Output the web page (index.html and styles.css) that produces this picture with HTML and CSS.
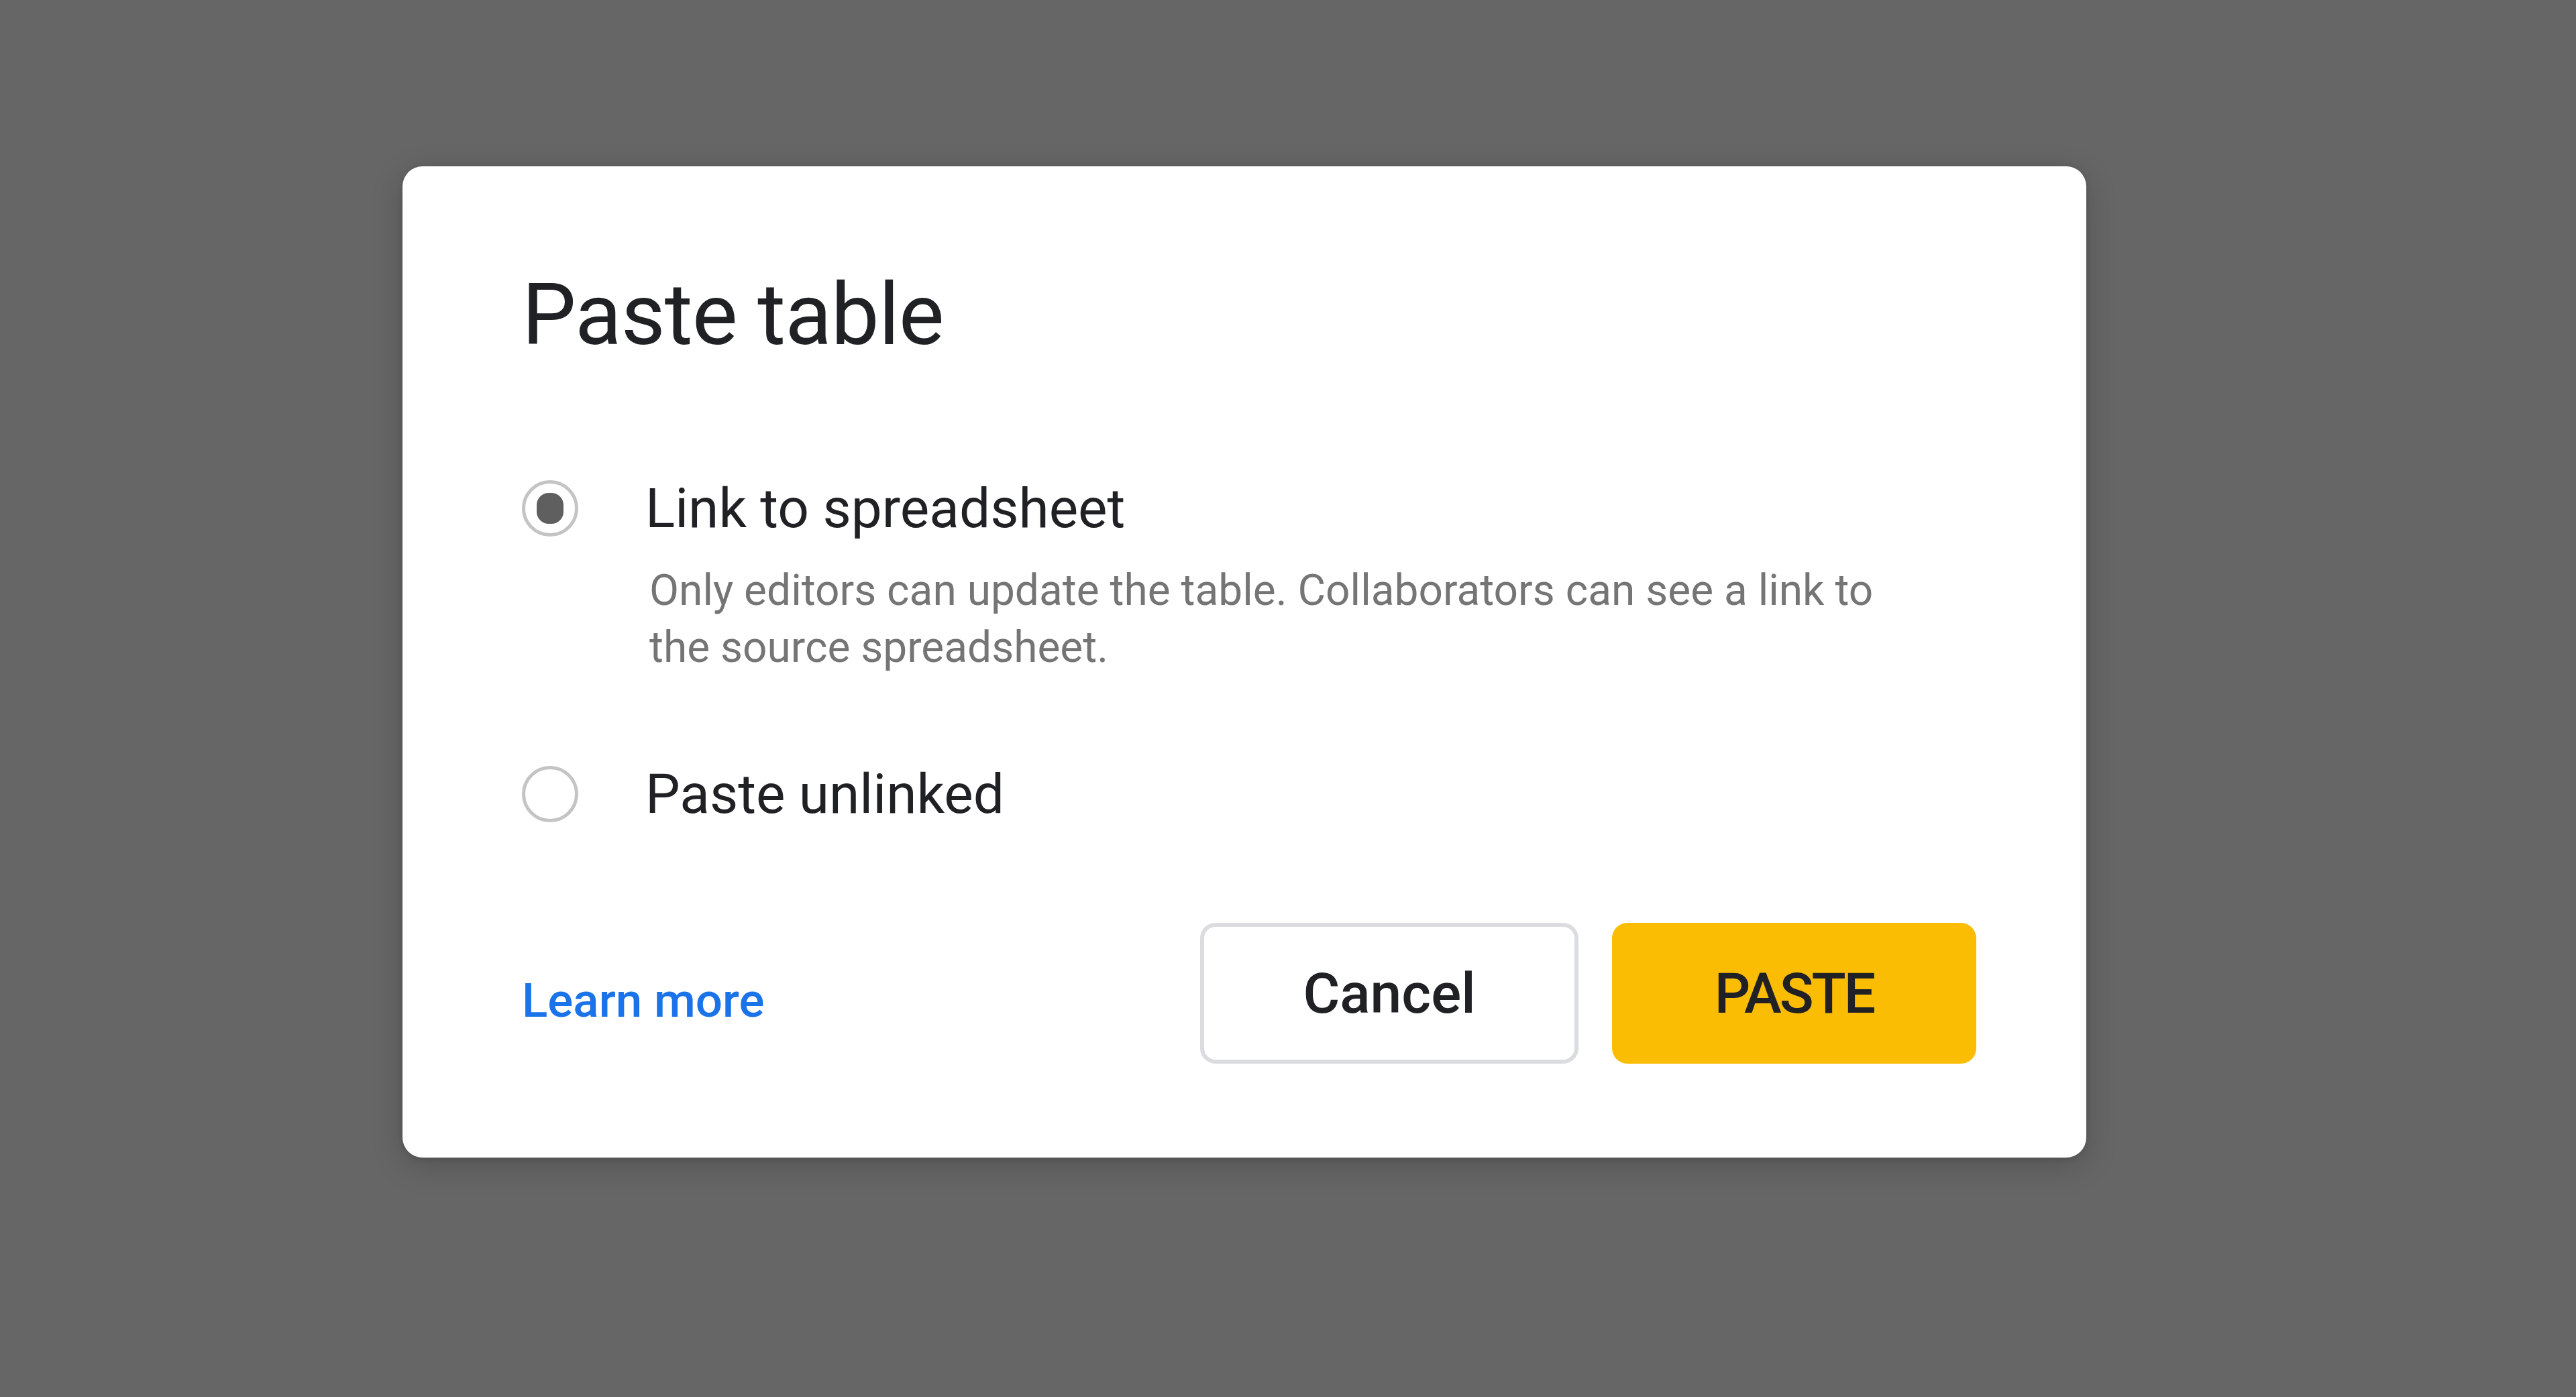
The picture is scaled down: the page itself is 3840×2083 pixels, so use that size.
FILE: index.html
```html
<!DOCTYPE html>
<html lang="en">
<head>
<meta charset="utf-8">
<title>Paste table</title>
<link rel="stylesheet" href="styles.css">
</head>
<body>
<div class="backdrop">
  <div class="dialog" role="dialog" aria-labelledby="dlg-title">
    <h1 class="title" id="dlg-title">Paste table</h1>
    <div class="options">
      <div class="option">
        <span class="radio checked"><span class="dot"></span></span>
        <div class="option-text">
          <div class="label">Link to spreadsheet</div>
          <div class="desc">Only editors can update the table. Collaborators can see a link to the source spreadsheet.</div>
        </div>
      </div>
      <div class="option second">
        <span class="radio"></span>
        <div class="option-text">
          <div class="label">Paste unlinked</div>
        </div>
      </div>
    </div>
    <div class="footer">
      <a class="learn" href="#">Learn more</a>
      <div class="buttons">
        <button class="btn cancel">Cancel</button>
        <button class="btn paste">PASTE</button>
      </div>
    </div>
  </div>
</div>
</body>
</html>
```
FILE: styles.css
```css
html, body {
  margin: 0;
  padding: 0;
}
body {
  background: #666666;
  width: 3840px;
  height: 2083px;
  overflow: hidden;
  font-family: Roboto, "Liberation Sans", Arial, sans-serif;
}
.backdrop {
  padding: 248px 0 0 600px;
}
.dialog {
  box-sizing: border-box;
  width: 2510px;
  height: 1478px;
  background: #ffffff;
  border-radius: 30px;
  box-shadow: 0 12px 48px rgba(0, 0, 0, 0.18), 0 2px 8px rgba(0, 0, 0, 0.12);
  padding: 146px 164px 140px 178px;
  display: flex;
  flex-direction: column;
}
.title {
  margin: 0;
  font-family: Roboto, "Liberation Sans", sans-serif;
  font-weight: 400;
  font-size: 128px;
  line-height: 150px;
  color: #202124;
  letter-spacing: -1px;
}
.options {
  margin-top: 164px;
  display: flex;
  flex-direction: column;
}
.option {
  display: flex;
  align-items: flex-start;
}
.option.second {
  margin-top: 126px;
}
.radio {
  box-sizing: border-box;
  flex: none;
  width: 84px;
  height: 84px;
  margin-top: 8px;
  border: 5px solid #c4c4c4;
  border-radius: 50%;
  display: flex;
  align-items: center;
  justify-content: center;
}
.dot {
  width: 40px;
  height: 46px;
  border-radius: 18px;
  background: #5f5f5f;
}
.option-text {
  margin-left: 100px;
  display: flex;
  flex-direction: column;
}
.label {
  font-size: 82px;
  line-height: 100px;
  color: #202124;
}
.desc {
  margin-top: 30px;
  margin-left: 6px;
  max-width: 1920px;
  font-size: 64px;
  line-height: 85px;
  color: #757575;
}
.footer {
  margin-top: 142px;
  display: flex;
  align-items: center;
  justify-content: space-between;
}
.learn {
  margin-top: 20px;
  font-family: Roboto, "Liberation Sans", sans-serif;
  font-weight: 500;
  font-size: 71px;
  color: #1a73e8;
  text-decoration: none;
}
.buttons {
  display: flex;
  gap: 50px;
}
.btn {
  box-sizing: border-box;
  height: 210px;
  border-radius: 23px;
  font-family: Roboto, "Liberation Sans", sans-serif;
  font-weight: 500;
  font-size: 84px;
  color: #202124;
  display: flex;
  align-items: center;
  justify-content: center;
  padding: 0;
  cursor: pointer;
}
.cancel {
  width: 564px;
  background: #ffffff;
  border: 6px solid #dadce0;
}
.paste {
  width: 543px;
  background: #fbbc04;
  border: none;
  letter-spacing: -3px;
}
```
